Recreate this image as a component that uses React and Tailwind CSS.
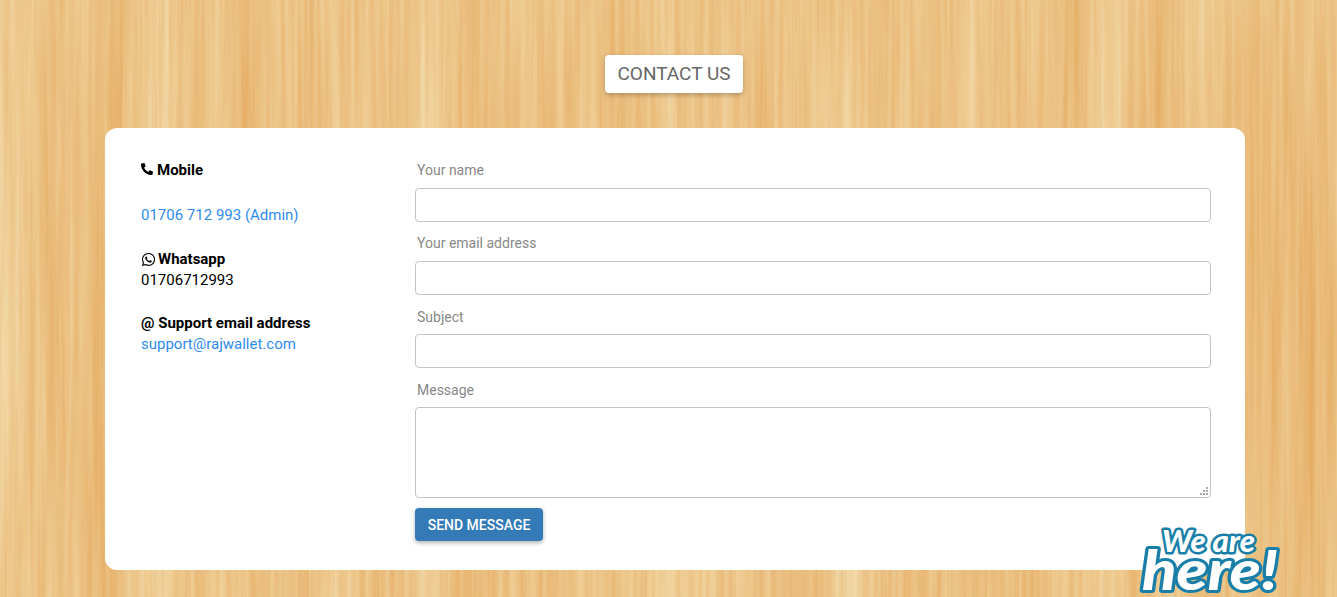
import React from "react";
import { FaPhoneAlt, FaWhatsapp } from "react-icons/fa";

function WoodBackground() {
  return (
    <svg className="absolute inset-0 w-full h-full" aria-hidden="true">
      <filter id="wood" x="0" y="0" width="100%" height="100%" colorInterpolationFilters="sRGB">
        <feTurbulence type="fractalNoise" baseFrequency="0.2 0.004" numOctaves="3" seed="11" result="fine" />
        <feColorMatrix in="fine" type="matrix" values="1 0 0 0 0  1 0 0 0 0  1 0 0 0 0  0 0 0 0 1" result="fineOpaque" />
        <feTurbulence type="fractalNoise" baseFrequency="0.022 0.0012" numOctaves="3" seed="4" result="coarse" />
        <feColorMatrix in="coarse" type="matrix" values="1 0 0 0 0  1 0 0 0 0  1 0 0 0 0  0 0 0 0 1" result="coarseOpaque" />
        <feComposite in="fineOpaque" in2="coarseOpaque" operator="arithmetic" k1="0" k2="0.45" k3="0.55" k4="0" />
        <feColorMatrix
          type="matrix"
          values="0.08 0 0 0 0.885
                  0.30 0 0 0 0.615
                  0.46 0 0 0 0.295
                  0 0 0 0 1"
        />
      </filter>
      <rect width="100%" height="100%" filter="url(#wood)" />
    </svg>
  );
}

function WeAreHere() {
  const textProps = {
    fontFamily: "Lato, 'DejaVu Sans', sans-serif",
    fontWeight: 900,
    fontStyle: "italic",
    fill: "#ffffff",
    stroke: "#1a7fa8",
    strokeLinejoin: "round",
    paintOrder: "stroke",
  };
  return (
    <svg className="absolute left-[1136px] top-[522px] w-[148px] h-[75px]" viewBox="0 0 148 75">
      <text x="26" y="30" fontSize="31" strokeWidth="5" textLength="93" lengthAdjust="spacingAndGlyphs" {...textProps}>
        We are
      </text>
      <text x="6" y="68" fontSize="56" strokeWidth="6" textLength="136" lengthAdjust="spacingAndGlyphs" {...textProps}>
        here!
      </text>
    </svg>
  );
}

function FieldLabel({ children, low }) {
  return (
    <label className={low ? "block pl-0.5 h-[34px] pt-[7px] text-[14px] leading-[20px] text-[#888888]" : "block pl-0.5 h-[34px] pt-[6px] text-[14px] leading-[20px] text-[#888888]"}>
      {children}
    </label>
  );
}

function Field({ label, low }) {
  return (
    <div>
      <FieldLabel low={low}>{label}</FieldLabel>
      <input type="text" className="block w-full h-[34px] rounded border border-[#c4c4c4] bg-white" />
    </div>
  );
}

export default function App() {
  return (
    <div className="relative h-[597px] overflow-hidden font-['Roboto',sans-serif]">
      <WoodBackground />
      <div className="relative flex flex-col items-center pt-[55px] pl-[13px]">
        <h1 className="mr-[2px] h-[38px] w-[138px] flex items-center justify-center rounded bg-white text-[19px] text-[#666666] shadow-[0_2px_5px_rgba(0,0,0,0.25)]">
          CONTACT US
        </h1>
        <div className="mt-[35px] w-[1140px] h-[442px] rounded-xl bg-white flex pl-[36px] pr-[34px] pt-[26px]">
          <div className="w-[274px] shrink-0 text-[15px] leading-[21px] text-black">
            <div className="h-[51px] pt-[6px] flex items-start gap-[4px] font-bold">
              <FaPhoneAlt className="w-[12px] h-[12px] mt-[3px] shrink-0" />
              <span>Mobile</span>
            </div>
            <a className="block text-[#2f8cf0]">01706 712 993 (Admin)</a>
            <div className="mt-[23px] flex items-center gap-[2px] font-bold">
              <FaWhatsapp className="w-[15px] h-[15px] shrink-0" />
              <span>Whatsapp</span>
            </div>
            <div>01706712993</div>
            <div className="mt-[22px] font-bold">@ Support email address</div>
            <a className="block text-[#2f8cf0]">support@rajwallet.com</a>
          </div>
          <div className="flex-1">
            <div className="flex flex-col gap-[5px]">
              <Field label="Your name" />
              <Field label="Your email address" />
              <Field label="Subject" low />
              <div className="relative">
                <FieldLabel low>Message</FieldLabel>
                <textarea className="block w-full h-[91px] rounded border border-[#c4c4c4] bg-white resize-none" />
                <svg className="absolute right-[2px] bottom-[2px] w-[9px] h-[9px]" viewBox="0 0 9 9" fill="#a8a8a8">
                  <rect x="6" y="0" width="2" height="2" />
                  <rect x="3" y="3" width="2" height="2" />
                  <rect x="6" y="3" width="2" height="2" />
                  <rect x="0" y="6" width="2" height="2" />
                  <rect x="3" y="6" width="2" height="2" />
                  <rect x="6" y="6" width="2" height="2" />
                </svg>
              </div>
            </div>
            <button className="mt-[10px] h-[33px] w-[128px] pt-px rounded bg-[#337ab7] text-[14px] font-medium text-white shadow-[0_2px_4px_rgba(0,0,0,0.3)]">
              SEND MESSAGE
            </button>
          </div>
        </div>
      </div>
      <WeAreHere />
    </div>
  );
}
